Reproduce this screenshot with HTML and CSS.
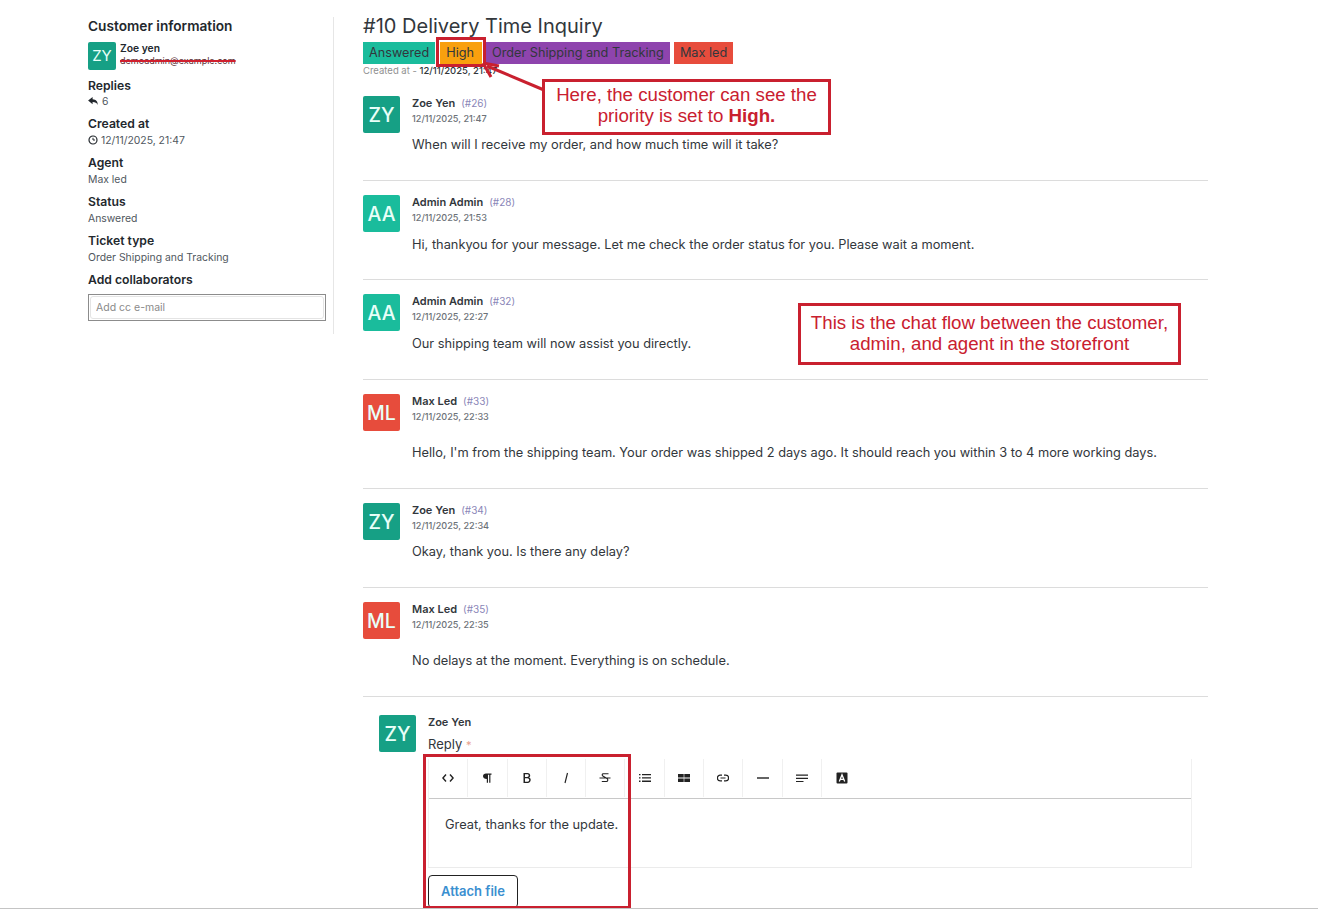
FILE: index.html
```html
<!DOCTYPE html>
<html lang="en">
<head>
    <meta charset="UTF-8">
    <title>#10 Delivery Time Inquiry</title>
    <link rel="stylesheet" href="styles.css">
</head>
<body>
    <div class="page">
        <aside class="sidebar">
            <h4 class="side-title">Customer information</h4>
            <div class="customer">
                <div class="avatar avatar-small green">ZY</div>
                <div class="customer-info">
                    <div class="customer-name">Zoe yen</div>
                    <div class="customer-mail">demoadmin@example.com</div>
                </div>
            </div>
            <div class="side-block side-replies">
                <h5>Replies</h5>
                <p><svg class="side-icon" viewBox="0 0 12 10"><path d="M5 0 0 4l5 4V5.600c3 0 4.700.8 5.600 3.400C11 5 9 2.500 5 2.400z" fill="#23282d"/></svg> 6</p>
            </div>
            <div class="side-block">
                <h5>Created at</h5>
                <p><svg class="side-icon clock" viewBox="0 0 10 10"><circle cx="5" cy="5" r="4" fill="none" stroke="#23282d" stroke-width="1.200"/><path d="M5 2.800V5h2" fill="none" stroke="#23282d"/></svg> 12/11/2025, 21:47</p>
            </div>
            <div class="side-block">
                <h5>Agent</h5>
                <p>Max led</p>
            </div>
            <div class="side-block">
                <h5>Status</h5>
                <p>Answered</p>
            </div>
            <div class="side-block">
                <h5>Ticket type</h5>
                <p>Order Shipping and Tracking</p>
            </div>
            <div class="side-block">
                <h5>Add collaborators</h5>
                <div class="cc-outer"><input class="cc-input" type="text" placeholder="Add cc e-mail"></div>
            </div>
        </aside>

        <main class="main">
            <h1 class="ticket-title">#10 Delivery Time Inquiry</h1>
            <div class="tags">
                <span class="tag tag-teal">Answered</span>
                <span class="tag tag-orange">High</span>
                <span class="tag tag-purple">Order Shipping and Tracking</span>
                <span class="tag tag-red">Max led</span>
            </div>
            <div class="created">Created at - <b>12/11/2025, 21:47</b></div>

            <div class="message">
                <div class="avatar green">ZY</div>
                <div class="message-body">
                    <div class="message-head"><b>Zoe Yen</b><span class="ref">(#26)</span></div>
                    <div class="message-date">12/11/2025, 21:47</div>
                    <p class="message-text">When will I receive my order, and how much time will it take?</p>
                </div>
            </div>
            <div class="message">
                <div class="avatar teal">AA</div>
                <div class="message-body">
                    <div class="message-head"><b>Admin Admin</b><span class="ref">(#28)</span></div>
                    <div class="message-date">12/11/2025, 21:53</div>
                    <p class="message-text">Hi, thankyou for your message. Let me check the order status for you. Please wait a moment.</p>
                </div>
            </div>
            <div class="message">
                <div class="avatar teal">AA</div>
                <div class="message-body">
                    <div class="message-head"><b>Admin Admin</b><span class="ref">(#32)</span></div>
                    <div class="message-date">12/11/2025, 22:27</div>
                    <p class="message-text">Our shipping team will now assist you directly.</p>
                </div>
            </div>
            <div class="message message-agent">
                <div class="avatar red">ML</div>
                <div class="message-body">
                    <div class="message-head"><b>Max Led</b><span class="ref">(#33)</span></div>
                    <div class="message-date">12/11/2025, 22:33</div>
                    <p class="message-text">Hello, I'm from the shipping team. Your order was shipped 2 days ago. It should reach you within 3 to 4 more working days.</p>
                </div>
            </div>
            <div class="message">
                <div class="avatar green">ZY</div>
                <div class="message-body">
                    <div class="message-head"><b>Zoe Yen</b><span class="ref">(#34)</span></div>
                    <div class="message-date">12/11/2025, 22:34</div>
                    <p class="message-text">Okay, thank you. Is there any delay?</p>
                </div>
            </div>
            <div class="message message-agent">
                <div class="avatar red">ML</div>
                <div class="message-body">
                    <div class="message-head"><b>Max Led</b><span class="ref">(#35)</span></div>
                    <div class="message-date">12/11/2025, 22:35</div>
                    <p class="message-text">No delays at the moment. Everything is on schedule.</p>
                </div>
            </div>

            <div class="reply">
                <div class="avatar green">ZY</div>
                <div class="reply-body">
                    <div class="reply-name">Zoe Yen</div>
                    <div class="reply-label">Reply <span class="required">*</span></div>
                    <div class="editor">
                        <div class="toolbar">
                            <span class="tool"><svg viewBox="0 0 12 12"><path d="M4 2.500.9 6 4 9.500M8 2.500 11.100 6 8 9.500" fill="none" stroke="#222" stroke-width="1.400"/></svg></span>
                            <span class="tool"><svg viewBox="0 0 12 12"><path d="M5 1.500h5.500v1.300H9.400v8H8.200v-8H7v8H5.800V7C3.500 7 2 5.800 2 4.200s1.300-2.700 3-2.700z" fill="#222"/></svg></span>
                            <span class="tool"><svg viewBox="0 0 12 12"><path d="M2.500 1h4c1.700 0 2.700 1 2.700 2.400 0 1-.5 1.700-1.300 2.100 1.100.3 1.800 1.200 1.800 2.300 0 1.700-1.200 3.200-3 3.200H2.500zm1.500 1.300v2.700h2.200c1 0 1.500-.6 1.500-1.400s-.6-1.300-1.500-1.300zM4 6.300v3.400h2.500c1 0 1.700-.7 1.700-1.700S7.500 6.300 6.500 6.300z" fill="#222"/></svg></span>
                            <span class="tool"><svg viewBox="0 0 12 12"><path d="M7.500 1 5 11" fill="none" stroke="#222" stroke-width="1.200"/></svg></span>
                            <span class="tool"><svg viewBox="0 0 12 12"><path d="M9.500 1.800H4.300C3 1.800 2.800 3.400 3.800 4L8 6.500c1.300.8 1 3-.7 3H2.800M.5 6h11" fill="none" stroke="#222" stroke-width="1.100"/></svg></span>
                            <span class="tool"><svg viewBox="0 0 12 12"><path d="M0 2h1.500v1.300H0zM3 2h9v1.300H3zM0 5.300h1.500v1.300H0zM3 5.300h9v1.300H3zM0 8.600h1.500v1.300H0zM3 8.600h9v1.300H3z" fill="#222"/></svg></span>
                            <span class="tool"><svg viewBox="0 0 12 12"><path d="M0 2h5.700v3.600H0zM6.300 2H12v3.600H6.300zM0 6.400h5.700V10H0zM6.300 6.400H12V10H6.300z" fill="#222"/></svg></span>
                            <span class="tool"><svg viewBox="0 0 12 12"><path d="M5 3.200H3.200a2.800 2.800 0 0 0 0 5.600H5M7 3.200h1.800a2.800 2.800 0 0 1 0 5.600H7M3.500 6h5" fill="none" stroke="#222" stroke-width="1.200"/></svg></span>
                            <span class="tool"><svg viewBox="0 0 12 12"><path d="M0 5.300h12v1.400H0z" fill="#222"/></svg></span>
                            <span class="tool"><svg viewBox="0 0 12 12"><path d="M0 2.500h12v1.200H0zM0 5.700h12v1.200H0zM0 8.900h7.500v1.200H0z" fill="#222"/></svg></span>
                            <span class="tool"><svg viewBox="0 0 12 12"><rect x=".5" y=".5" width="11" height="11" rx="1" fill="#222"/><path d="M3.300 9.500 6 2.700l2.700 6.800M4.200 7.400h3.600" fill="none" stroke="#fff" stroke-width="1.300"/></svg></span>
                        </div>
                        <div class="editor-text">Great, thanks for the update.</div>
                    </div>
                    <button class="attach" type="button">Attach file</button>
                </div>
            </div>
        </main>
    </div>

    <!-- annotations drawn over the screenshot -->
    <div class="mark mark-high"></div>
    <div class="mark mark-editor"></div>
    <svg class="arrow" width="70" height="40" viewBox="0 0 70 40">
        <path d="M64 30 7 6" fill="none" stroke="#c9202f" stroke-width="3"/>
        <path d="M3 3 19 6M3 3 11 17" fill="none" stroke="#c9202f" stroke-width="3"/>
    </svg>
    <div class="note note-priority">Here, the customer can see the priority is set to <b>High.</b></div>
    <div class="note note-chat">This is the chat flow between the customer, admin, and agent in the storefront</div>
    <div class="bottom-line"></div>
</body>
</html>
```

FILE: styles.css
```css
*, *:before, *:after {
    box-sizing: border-box;
}

html, body {
    height: 909px;
    overflow: hidden;
}

body {
    margin: 0;
    font-family: 'Inter', sans-serif;
    font-size: 13px;
    color: #32373c;
    background: #fff;
}

.page {
    display: flex;
    align-items: flex-start;
    padding: 16px 110px 0 88px;
}

.sidebar {
    width: 246px;
    height: 317px;
    margin-top: 1px;
    flex-shrink: 0;
    padding-right: 7px;
    border-right: 1px solid #e6e6e6;
}

.side-title {
    margin: 1px 0 7px;
    font-size: 13.700px;
    line-height: 17px;
    font-weight: 600;
    color: #23282d;
}

.customer {
    display: flex;
    gap: 4px;
    height: 28px;
    margin-bottom: 8px;
}

.customer-name {
    font-size: 10.300px;
    line-height: 12px;
    font-weight: 600;
    color: #23282d;
}

.customer-mail {
    margin-top: 1px;
    font-size: 9px;
    line-height: 12px;
    color: #5a2a30;
    text-decoration: line-through 2px #d0202f;
}

.side-block {
    margin-bottom: 7px;
}

.side-block h5 {
    margin: 0 0 3px;
    font-size: 12.200px;
    line-height: 15px;
    font-weight: 600;
    color: #23282d;
}

.side-replies h5 {
    margin-bottom: 2px;
}

.side-block p {
    margin: 0;
    font-size: 10.400px;
    line-height: 14px;
    color: #50575e;
}

.side-icon {
    display: inline-block;
    width: 11px;
    height: 9px;
    vertical-align: -0.5px;
}

.side-icon.clock {
    width: 10px;
    height: 10px;
    vertical-align: -1px;
}

.cc-outer {
    margin-top: 7px;
    width: 238px;
    height: 27px;
    border: 1px solid #8c8c8c;
    padding: 1px;
}

.cc-input {
    display: block;
    width: 100%;
    height: 23px;
    padding: 0 5px;
    border: 1px solid #e4e4e4;
    border-radius: 3px;
    font-family: inherit;
    font-size: 10.500px;
    outline: none;
}

.cc-input::placeholder {
    color: #8a8a8a;
}

.main {
    flex: 1;
    margin-left: 29px;
    min-width: 0;
}

.ticket-title {
    margin: -1px 0 0;
    font-size: 20px;
    line-height: 22px;
    font-weight: 400;
    color: #32373c;
}

.tags {
    display: flex;
    gap: 4px;
    margin-top: 5px;
}

.tag {
    height: 22px;
    padding: 0 6px;
    font-size: 12.700px;
    line-height: 22px;
    color: #32373c;
}

.tag-teal { background: #1abc9c; }
.tag-orange { background: #f9a00e; margin-left: 1px; padding: 0 8px 0 6px; }
.tag-purple { background: #8e44ad; }
.tag-red { background: #e74c3c; }

.created {
    margin-top: 1px;
    height: 31px;
    font-size: 9.500px;
    line-height: 12px;
    color: #909090;
}

.created b {
    font-weight: 500;
    color: #32373c;
}

.message {
    display: flex;
    gap: 12px;
    height: 85.200px;
    margin-bottom: 14px;
    border-bottom: 1px solid #dcdcdc;
}

.message-agent {
    height: 95.200px;
}

.message-agent .message-text {
    margin-top: 22px;
}

.avatar {
    width: 37px;
    height: 37px;
    flex-shrink: 0;
    border-radius: 2px;
    font-size: 19.500px;
    font-weight: 500;
    line-height: 38px;
    text-align: center;
    color: #e8fff8;
}

.avatar-small {
    width: 28px;
    height: 28px;
    font-size: 15px;
    font-weight: 400;
    line-height: 28px;
}

.green { background: #16a085; }
.teal { background: #1abc9c; }
.red { background: #e74c3c; }

.message-body {
    flex: 1;
    min-width: 0;
}

.message-head {
    width: fit-content;
    font-size: 11px;
    line-height: 14px;
    color: #32373c;
}

.message-head b {
    font-weight: 600;
}

.ref {
    margin-left: 6px;
    font-size: 10px;
    color: #8a86b8;
}

.message-date {
    width: fit-content;
    margin-top: 2px;
    font-size: 9.150px;
    line-height: 13px;
    font-weight: 500;
    color: #6c7278;
}

.message-text {
    width: fit-content;
    margin: 12.400px 0 0;
    font-size: 12.800px;
    line-height: 15px;
    color: #32373c;
}

.reply {
    display: flex;
    gap: 12px;
    padding: 4px 16px 0;
}

.reply-body {
    flex: 1;
    min-width: 0;
}

.reply-name {
    font-size: 11px;
    line-height: 14px;
    font-weight: 600;
}

.reply-label {
    margin-top: 7px;
    font-size: 13px;
    line-height: 16px;
}

.required {
    color: #e8a08c;
    font-size: 11px;
}

.editor {
    margin-top: 6px;
    border-right: 1px solid #f0f0f0;
    border-left: 1px solid #f0f0f0;
    border-bottom: 1px solid #ebebeb;
}

.toolbar {
    display: flex;
    height: 40px;
    border-bottom: 1px solid #c8c8c8;
}

.tool {
    display: flex;
    align-items: center;
    justify-content: center;
    width: 39.300px;
    height: 38px;
    border-right: 1px solid #f0f0f0;
}

.tool:last-child {
    border-right: none;
}

.tool svg {
    width: 12px;
    height: 12px;
}

.editor-text {
    height: 68px;
    padding: 18px 16px 0;
    font-size: 12.800px;
    line-height: 15px;
}

.attach {
    display: block;
    margin-top: 7px;
    width: 90px;
    height: 33px;
    padding: 0 0 2px;
    border: 1px solid #222;
    border-radius: 4px;
    background: #fff;
    font-family: inherit;
    font-size: 13px;
    font-weight: 600;
    color: #3a8fd0;
}

.note {
    position: absolute;
    padding: 3px 4px;
    border: 3px solid #c9202f;
    background: #fff;
    font-family: 'Liberation Sans', sans-serif;
    font-size: 18.700px;
    line-height: 21px;
    text-align: center;
    color: #c9202f;
}

.note-priority {
    left: 542px;
    top: 79px;
    width: 289px;
    height: 56px;
    padding: 2px 8px;
}

.note-chat {
    left: 798px;
    top: 303px;
    width: 383px;
    height: 62px;
    padding-top: 6px;
}

.mark {
    position: absolute;
    border: 3px solid #c9202f;
}

.mark-high {
    left: 436px;
    top: 37px;
    width: 50px;
    height: 30px;
}

.mark-editor {
    left: 423px;
    top: 754px;
    width: 208px;
    height: 155px;
}

.arrow {
    position: absolute;
    left: 480px;
    top: 60px;
}

.bottom-line {
    position: absolute;
    left: 0;
    top: 908px;
    width: 100%;
    height: 1px;
    background: #c4c4c4;
}
```
